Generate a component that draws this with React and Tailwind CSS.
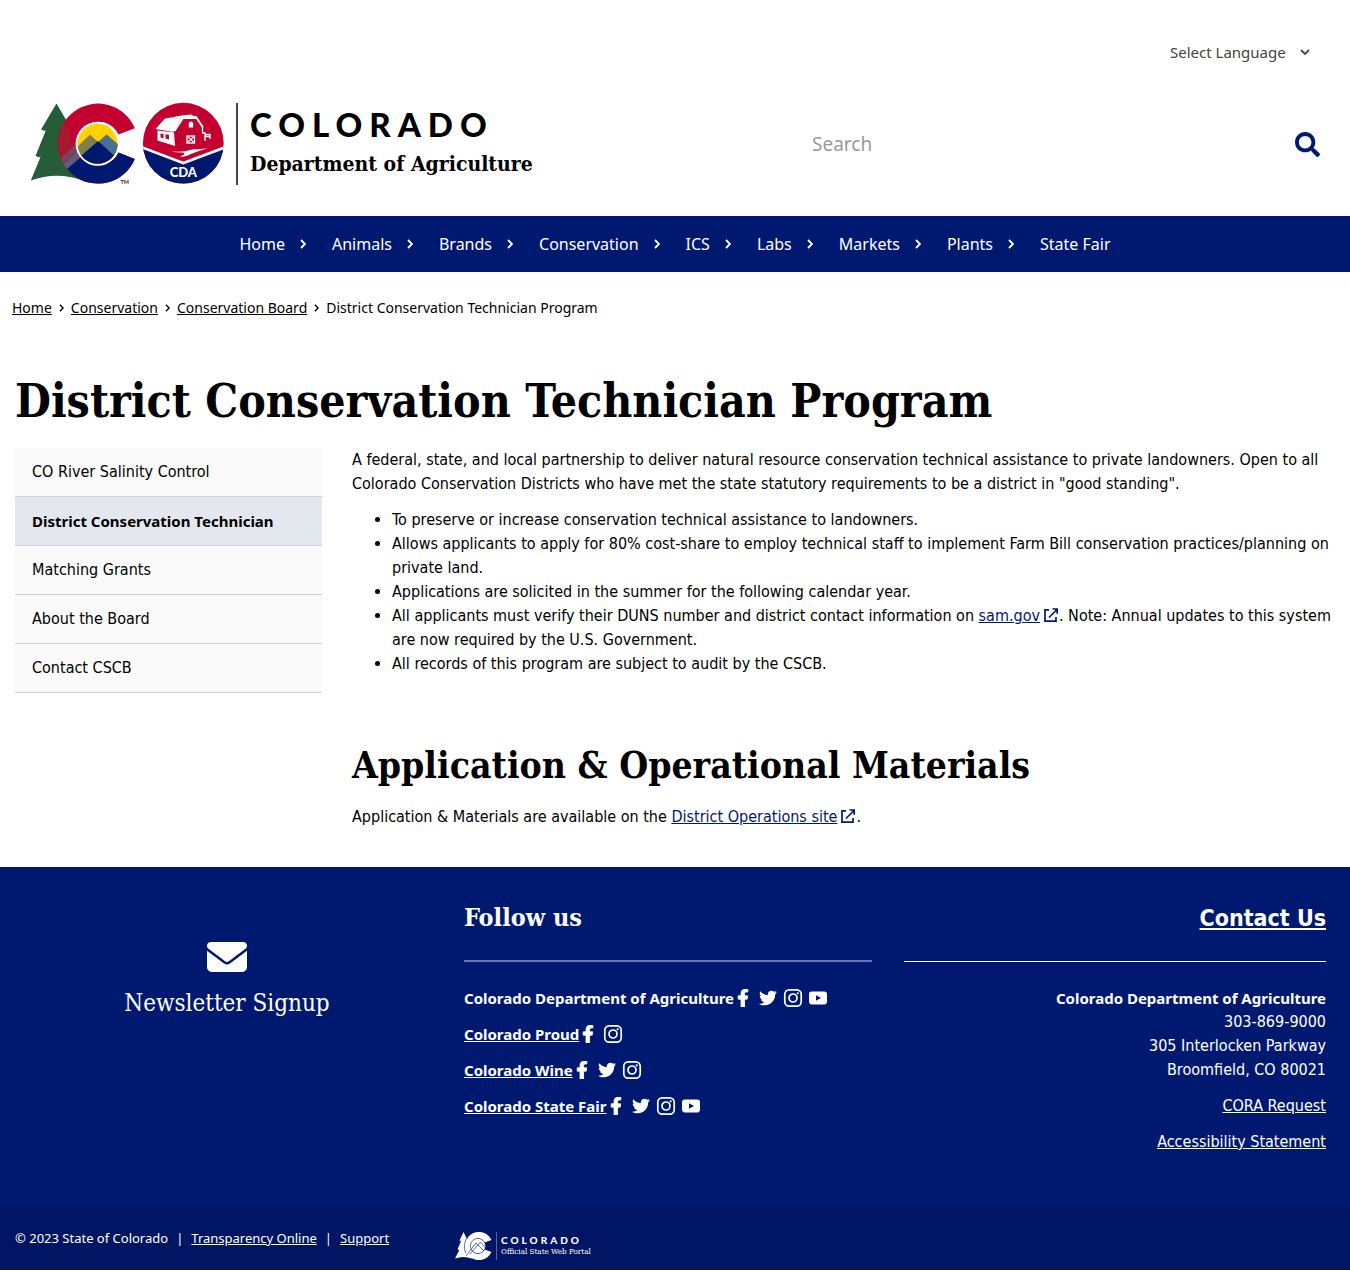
import React from "react";
import { FaEnvelope } from "react-icons/fa6";
import { FaFacebookF, FaSearch, FaTwitter } from "react-icons/fa";

const NAV = ["Home", "Animals", "Brands", "Conservation", "ICS", "Labs", "Markets", "Plants", "State Fair"];

const SIDE = [
  { label: "CO River Salinity Control" },
  { label: "District Conservation Technician", active: true },
  { label: "Matching Grants" },
  { label: "About the Board" },
  { label: "Contact CSCB" },
];

const SOCIAL = [
  { label: "Colorado Department of Agriculture", icons: ["facebook", "twitter", "instagram", "youtube"] },
  { label: "Colorado Proud", link: true, icons: ["facebook", "instagram"] },
  { label: "Colorado Wine", link: true, icons: ["facebook", "twitter", "instagram"] },
  { label: "Colorado State Fair", link: true, icons: ["facebook", "twitter", "instagram", "youtube"] },
];

function Chevron({ className }) {
  return (
    <svg viewBox="0 0 6 10" className={className} fill="none" stroke="currentColor" strokeWidth="1.8" aria-hidden="true">
      <path d="M1 1l4 4-4 4" />
    </svg>
  );
}

function ExternalIcon() {
  return (
    <svg viewBox="0 0 16 16" className="-mb-0.5 ml-[3px] inline h-4 w-4 align-baseline text-[#001970]" fill="none" stroke="currentColor" strokeWidth="1.7" aria-hidden="true">
      <path d="M6 2.800H2V14.200H13V10" />
      <path d="M6 10.500L14 2.500M9.500 2H14.200V6.700" />
    </svg>
  );
}

function InstagramIcon() {
  return (
    <svg viewBox="0 0 20 20" className="h-5 w-5" fill="none" stroke="currentColor" strokeWidth="1.7" aria-hidden="true">
      <rect x="1.8" y="1.8" width="16.4" height="16.4" rx="4.4" />
      <circle cx="10" cy="10" r="4" />
      <circle cx="14.7" cy="5.3" r="1.1" fill="currentColor" stroke="none" />
    </svg>
  );
}

function YoutubeIcon() {
  return (
    <svg viewBox="0 0 20 20" className="h-5 w-5" aria-hidden="true">
      <rect x="1" y="3.6" width="18" height="12.8" rx="2.8" fill="currentColor" />
      <path d="M8 7.2l5 2.8-5 2.8z" fill="#001970" />
    </svg>
  );
}

function SocialIcon({ name }) {
  if (name === "facebook") return <FaFacebookF className="h-[18px] w-5" stroke="currentColor" strokeWidth="24" />;
  if (name === "twitter") return <FaTwitter className="h-[18px] w-5" />;
  if (name === "instagram") return <InstagramIcon />;
  return <YoutubeIcon />;
}

function LogoMark() {
  return (
    <svg viewBox="0 0 196 84" className="h-[84px] w-[196px] shrink-0" aria-hidden="true">
      <defs>
        <clipPath id="ring">
          <path d="M104.8 26.2A40 40 0 1 0 104.8 57L88.5 50.5A21.8 21.8 0 1 1 88.5 32.5Z" />
        </clipPath>
        <clipPath id="sun">
          <circle cx="67.6" cy="41.8" r="20" />
        </clipPath>
        <clipPath id="seal">
          <circle cx="153.3" cy="41.2" r="40.4" />
        </clipPath>
      </defs>
      <path d="M26.5 1.5L11 27.5Q13.5 29 15.8 28.5L5.5 54Q8.500 55.500 10.500 55L0.800 78.500Q20 71.500 40 75Q50 77 56 80L60 30L42 28Z" fill="#245d38" />
      <g clipPath="url(#ring)">
        <rect x="27" y="0" width="84" height="84" fill="#c3002f" />
        <path d="M27 22h8l5 5 1 14 3 2-18 18z" fill="#a6192e" />
        <path d="M26 61L49 39L54 56L34 70Z" fill="#7a4260" />
        <path d="M30 66L48 50L52 60L36 72Z" fill="#5f5d86" />
        <path d="M37 67L68 40L112 60V86H37Z" fill="#001970" />
        <path d="M28 70L37 66L46 77V84H28Z" fill="#1d4a55" />
      </g>
      <circle cx="67.6" cy="41.8" r="22" fill="#fff" />
      <g clipPath="url(#sun)">
        <rect x="46" y="20" width="44" height="44" fill="#ffd100" />
        <path d="M44 48L60 32.500L68 40L76.500 32.500L92 46V64H44Z" fill="#827f4b" />
        <path d="M68 41L76.500 32.500L92 46V62Z" fill="#496f91" />
        <path d="M42 62L68 39L92 61V66H42Z" fill="#001970" />
      </g>
      <text x="90.500" y="81.500" fontSize="5.500" fontWeight="700" fontFamily="Lato, sans-serif" fill="#222">TM</text>
      <g clipPath="url(#seal)">
        <rect x="112" y="0" width="84" height="84" fill="#c3002f" />
        <path d="M112 46L153.300 62L195 46V84H112Z" fill="#001970" />
        <path d="M111 45L153.300 61L196 45" fill="none" stroke="#fff" strokeWidth="2.600" />
      </g>
      <path d="M125.500 27L135 16.500L153 13.500L147 24L143.500 30Z" fill="#fff" />
      <path d="M127.500 28.500L144 30.500L145 44L127.500 38.500Z" fill="#fff" />
      <path d="M130.500 31.500l3 .5v4.200l-3-.8zM135.500 32.200l3.500.6v4.600l-3.500-1z" fill="#c3002f" />
      <path d="M144.500 29L154 14.500L166 15L173 25.500" fill="none" stroke="#fff" strokeWidth="1.800" />
      <path d="M145 14.500L161 12.500L168.500 17L153 17Z" fill="#fff" />
      <path d="M158.800 25.500v-4.500l2.200-1.800 2.200 1.800v4.500z" fill="#fff" />
      <rect x="157" y="34" width="7.500" height="7" fill="none" stroke="#fff" strokeWidth="1.300" />
      <path d="M157 34l7.500 7M164.500 34l-7.500 7" stroke="#fff" strokeWidth="1.100" />
      <path d="M172.500 25v6h3M175 39v-6.500h5V37M175 34.500h5" fill="none" stroke="#fff" strokeWidth="1.300" />
      <path d="M141 49Q150 51 162 47.500L177 46.500Q168 49 161 52Q155 55.500 150 54.500Q157 51.500 153 50.500Q147 51 141 49Z" fill="#fff" />
      <text x="153.300" y="75" textAnchor="middle" fontSize="13" fontWeight="900" fontFamily="Lato, sans-serif" fill="#fff">CDA</text>
    </svg>
  );
}

function PortalMark() {
  return (
    <svg viewBox="0 0 38 30" className="h-[30px] w-[38px] shrink-0" aria-hidden="true">
      <path d="M8.500 1L4.500 9.500l1.500.5L2.500 18.500l1.800.4L0 27.500Q8 24.500 17 27.500L20 8L12 8Z" fill="#fff" />
      <path d="M36.500 9A14 14 0 1 0 36.500 21L29.500 18.500A7.500 7.500 0 1 1 29.500 11.500Z" fill="#fff" />
      <circle cx="23" cy="15" r="7.600" fill="#fff" stroke="#001563" strokeWidth="0.600" />
      <path d="M11 25L21 12l8 8M15 23L25.500 11l5 5.500" fill="none" stroke="#001563" strokeWidth="0.600" />
      <path d="M12.500 6Q7.500 13 10.500 22" fill="none" stroke="#001563" strokeWidth="0.600" />
    </svg>
  );
}

export default function App() {
  return (
    <div className="bg-white font-['DejaVu_Sans_Condensed','DejaVu_Sans',sans-serif] text-base leading-6 text-black">
      <header>
        <div className="flex justify-end pt-9 pr-10">
          <div className="relative flex items-center text-[#444]">
            <select aria-label="Select Language" className="h-8 appearance-none bg-transparent pr-6 font-['Noto_Sans',sans-serif] text-[15px]">
              <option>Select Language</option>
            </select>
            <Chevron className="pointer-events-none absolute right-0.5 h-2.5 w-1.5 rotate-90" />
          </div>
        </div>
        <div className="flex items-center justify-between px-[30px] pt-[34px] pb-[30px]">
          <a href="#" className="flex items-center text-black">
            <LogoMark />
            <span className="ml-2.5 h-[82px] w-0.5 bg-[#444]" />
            <span className="ml-3 block">
              <span className="block font-['Lato',sans-serif] text-[33px] leading-10 font-black tracking-[7px]">COLORADO</span>
              <span className="block font-['DejaVu_Serif_Condensed','DejaVu_Serif',serif] text-[21px] leading-10 font-bold">Department of Agriculture</span>
            </span>
          </a>
          <form className="flex w-[508px] items-center" onSubmit={(e) => e.preventDefault()}>
            <input type="search" aria-label="Search" placeholder="Search" className="min-w-0 flex-1 bg-transparent font-['Noto_Sans',sans-serif] text-[19px] outline-none placeholder:text-[#999]" />
            <button type="submit" aria-label="Submit search" className="text-[#001970]">
              <FaSearch className="h-[25px] w-[25px]" />
            </button>
          </form>
        </div>
      </header>

      <nav className="flex h-14 items-center justify-center gap-[26px] bg-[#001970] font-['Noto_Sans',sans-serif] text-white">
        {NAV.map((n, i) => (
          <a key={n} href="#" className="flex items-center gap-[15px]">
            {n}
            {i < NAV.length - 1 && <Chevron className="h-2.5 w-1.5" />}
          </a>
        ))}
      </nav>

      <ol className="flex items-center px-3 pt-6 font-['Noto_Sans',sans-serif] text-sm leading-6">
        {["Home", "Conservation", "Conservation Board"].map((b) => (
          <li key={b} className="flex items-center">
            <a href="#" className="underline">{b}</a>
            <Chevron className="mx-[7px] h-2 w-[5px]" />
          </li>
        ))}
        <li>District Conservation Technician Program</li>
      </ol>

      <main className="px-[15px] pt-[51px] pb-[38px]">
        <h1 className="pb-[17px] font-['DejaVu_Serif_Condensed','DejaVu_Serif',serif] text-[46px] leading-[60px] font-bold">
          District Conservation Technician Program
        </h1>
        <div className="flex gap-[30px]">
          <aside className="w-[307px] shrink-0">
            <ul>
              {SIDE.map((s) => (
                <li key={s.label} className={s.active ? "border-b border-[#ccd2da] bg-[#e3e7ee]" : "border-b border-[#d0d0d0] bg-[#fafafa]"}>
                  <a href="#" className={s.active ? "block px-[17px] py-3 font-['Noto_Sans',sans-serif] text-[15px] leading-6 font-bold" : "block px-[17px] py-3"}>{s.label}</a>
                </li>
              ))}
            </ul>
          </aside>
          <article className="min-w-0 flex-1">
            <p className="mb-3">
              A federal, state, and local partnership to deliver natural resource conservation technical assistance to private landowners. Open to all Colorado Conservation Districts who have met the state statutory requirements to be a district in "good standing".
            </p>
            <ul className="list-disc pl-10">
              <li>To preserve or increase conservation technical assistance to landowners.</li>
              <li>Allows applicants to apply for 80% cost-share to employ technical staff to implement Farm Bill conservation practices/planning on private land.</li>
              <li>Applications are solicited in the summer for the following calendar year.</li>
              <li>
                All applicants must verify their DUNS number and district contact information on <a href="#" className="text-[#001970] underline">sam.gov</a>
                <ExternalIcon />. Note: Annual updates to this system are now required by the U.S. Government.
              </li>
              <li>All records of this program are subject to audit by the CSCB.</li>
            </ul>
            <h2 className="mt-[65px] mb-4 font-['DejaVu_Serif_Condensed','DejaVu_Serif',serif] text-[37px] leading-[48px] font-bold">
              Application &amp; Operational Materials
            </h2>
            <p>
              Application &amp; Materials are available on the <a href="#" className="text-[#001970] underline">District Operations site</a>
              <ExternalIcon />.
            </p>
          </article>
        </div>
      </main>

      <footer className="bg-[#001970] text-white">
        <div className="grid min-h-[341px] grid-cols-3 pt-[35px]">
          <div className="pt-[35px] pl-1 text-center">
            <a href="#" className="inline-flex flex-col items-center">
              <FaEnvelope className="h-10 w-10" />
              <span className="mt-2.5 font-['DejaVu_Serif_Condensed','DejaVu_Serif',serif] text-[24px] leading-8">Newsletter Signup</span>
            </a>
          </div>
          <section className="pr-7 pl-3.5">
            <h3 className="border-b-2 border-[#6478b8] pb-[26px] font-['DejaVu_Serif_Condensed','DejaVu_Serif',serif] text-[25px] leading-8 font-bold">Follow us</h3>
            <ul className="flex flex-col gap-3 pt-6">
              {SOCIAL.map((s) => (
                <li key={s.label} className="flex h-6 items-center gap-[5px] font-['Noto_Sans',sans-serif] text-[15px] leading-6 font-bold">
                  {s.link ? <a href="#" className="underline">{s.label}</a> : <span>{s.label}</span>}
                  {s.icons.map((n, i) => (
                    <a key={n} href="#" aria-label={s.label + " on " + n} className={i === 0 ? "-ml-1.5" : ""}>
                      <SocialIcon name={n} />
                    </a>
                  ))}
                </li>
              ))}
            </ul>
          </section>
          <section className="pr-6 pl-1 text-right">
            <h3 className="border-b border-white pb-[27px] text-[23px] leading-8 font-bold">
              <a href="#" className="underline">Contact Us</a>
            </h3>
            <address className="pt-6 not-italic">
              <strong className="block font-['Noto_Sans',sans-serif] text-[15px] leading-6">Colorado Department of Agriculture</strong>
              303-869-9000<br />
              305 Interlocken Parkway<br />
              Broomfield, CO 80021
            </address>
            <p className="mt-3"><a href="#" className="underline">CORA Request</a></p>
            <p className="mt-3"><a href="#" className="underline">Accessibility Statement</a></p>
          </section>
        </div>
        <div className="grid grid-cols-3 bg-[#001563] pt-[23px] pb-[9px]">
          <p className="-mt-2 flex gap-2 pl-[15px] font-['Noto_Sans',sans-serif] text-[13px] leading-[30px]">
            <span>© 2023 State of Colorado</span>
            <span>|</span>
            <a href="#" className="underline">Transparency Online</a>
            <span>|</span>
            <a href="#" className="underline">Support</a>
          </p>
          <a href="#" className="flex items-center pl-[5px]">
            <PortalMark />
            <span className="ml-[3px] h-7 w-px bg-[#5566a5]" />
            <span className="ml-1 block">
              <span className="block font-['Lato',sans-serif] text-[10px] leading-3 font-black tracking-[3px]">COLORADO</span>
              <span className="block font-['DejaVu_Serif_Condensed','DejaVu_Serif',serif] text-[8px] leading-3">Official State Web Portal</span>
            </span>
          </a>
        </div>
      </footer>
    </div>
  );
}
